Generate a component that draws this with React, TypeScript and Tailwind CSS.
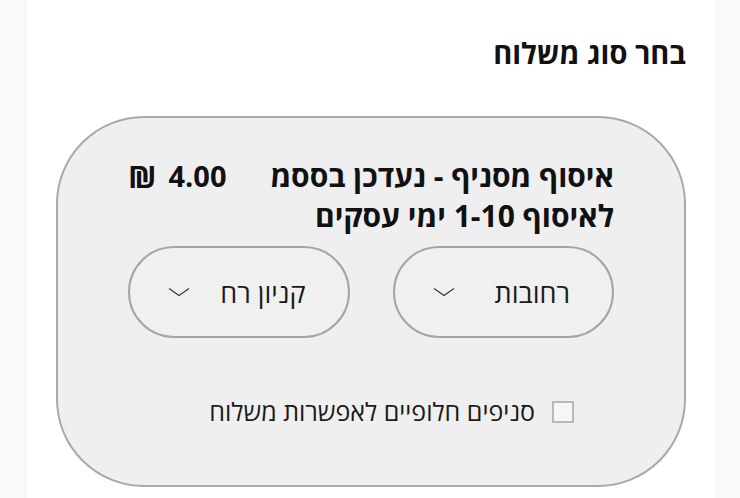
import React from 'react';

const Chevron = () => (
  <svg width="22" height="10" viewBox="0 0 22 10" fill="none" className="shrink-0">
    <path d="M1 1.5L11 8.5L21 1.5" stroke="#333" strokeWidth="1.1" />
  </svg>
);

const Dropdown = ({ label }: { label: string }) => (
  <div className="flex-1 h-[92px] rounded-full border-2 border-[#a5a5a5] bg-[#f0f0f0] flex items-center justify-between pr-[42px] pl-[38px]">
    <span className="text-[27px] text-[#1a1a1a] leading-none">{label}</span>
    <Chevron />
  </div>
);

const App = () => {
  return (
    <div
      dir="rtl"
      className="w-[740px] h-[498px] bg-[#f9f9f9] flex justify-center overflow-hidden"
      style={{ fontFamily: '"Open Sans", "Liberation Sans", "DejaVu Sans", sans-serif' }}
    >
      <div className="w-[688px] ml-[2px] bg-white flex flex-col pr-[29px] pl-[29px]">
        <h2 className="mt-[34px] h-[38px] text-[29px] font-bold text-[#111] leading-[38px]">
          בחר סוג משלוח
        </h2>

        <div className="mt-[44px] h-[371px] rounded-[88px] border-2 border-[#a9a9a9] bg-[#efefef] pt-[38px] pr-[70px] pl-[70px]">
          {/* כותרת ומחיר */}
          <div className="flex items-start justify-between">
            <div className="text-[30px] font-bold text-[#111] leading-[40px]">
              איסוף מסניף - נעדכן בססמ
              <br />
              לאיסוף 1-10 ימי עסקים
            </div>
            <div dir="ltr" className="flex items-center gap-[12px] text-[29px] font-bold text-[#111] leading-[40px] whitespace-nowrap">
              <span className="text-[31px]">₪</span>
              <span>4.00</span>
            </div>
          </div>

          {/* בחירת סניף */}
          <div className="mt-[10px] flex gap-[43px]">
            <Dropdown label="רחובות" />
            <Dropdown label="קניון רח" />
          </div>

          {/* סניפים חלופיים */}
          <div className="mt-[61px] mr-[40px] flex items-center gap-[17px]">
            <div className="w-[22px] h-[22px] border-2 border-[#b8b8b8] bg-[#f6f6f6]" />
            <span className="text-[25px] text-[#1a1a1a] leading-none">סניפים חלופיים לאפשרות משלוח</span>
          </div>
        </div>
      </div>
    </div>
  );
};

export default App;
